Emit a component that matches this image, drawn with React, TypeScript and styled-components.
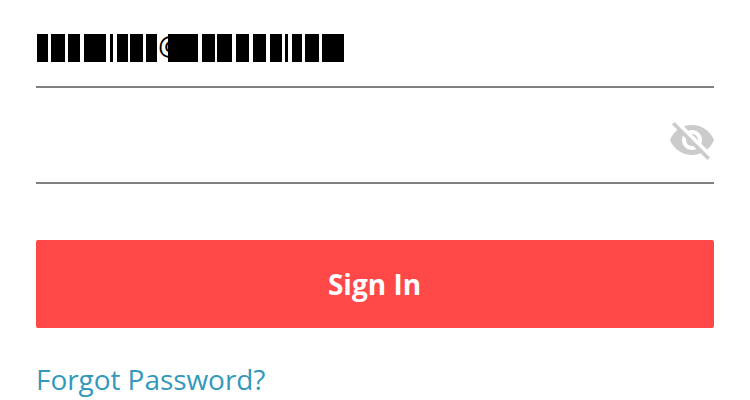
import React from "react";
import styled, { createGlobalStyle } from "styled-components";

const GlobalStyle = createGlobalStyle`
  * { box-sizing: border-box; }
  body {
    margin: 0;
    background: #fff;
    font-family: "Open Sans", "Noto Sans", sans-serif;
    overflow: hidden;
    -webkit-font-smoothing: antialiased;
  }
`;

const Form = styled.form`
  display: flex;
  flex-direction: column;
  height: 400px;
  padding: 0 36px;
`;

const Field = styled.div<{ $height: number; $top: number }>`
  display: flex;
  align-items: flex-start;
  height: ${(p) => p.$height}px;
  padding-top: ${(p) => p.$top}px;
  border-bottom: 2px solid #808080;
`;

const Redacted = styled.div`
  display: flex;
  height: 28px;
  padding-left: 1px;
`;

const Bar = styled.span<{ $width: number; $gap: number }>`
  flex: none;
  width: ${(p) => p.$width}px;
  margin-right: ${(p) => p.$gap}px;
  background: #000;
`;

// The bar that follows is painted over the right part of the sign.
const AtSign = styled.span`
  flex: none;
  width: 10px;
  margin-left: -1px;
  color: #000;
  font-size: 28px;
  line-height: 22px;
`;

const ToggleButton = styled.button`
  width: 48px;
  height: 48px;
  margin: 0 -2px 0 auto;
  padding: 0;
  border: 0;
  background: none;
  color: #cbcbcb;

  svg { display: block; }
`;

const SignInButton = styled.button`
  flex: none;
  height: 88px;
  margin-top: 56px;
  padding: 0 1px 0 0;
  border: 0;
  border-radius: 2px;
  background: #ff4848;
  color: #fff;
  font: 700 28px/88px "Open Sans", "Noto Sans", sans-serif;
`;

const ForgotLink = styled.a`
  align-self: flex-start;
  margin-top: 32px;
  color: #3399bb;
  font-size: 28px;
  line-height: 38px;
  letter-spacing: -0.06px;
  white-space: nowrap;
`;

// Each entry is [bar width, gap after it].
const beforeAt = [[11, 3], [14, 3], [12, 4], [22, 4], [3, 4], [11, 2], [13, 3], [11, 2]];
const afterAt = [
  [30, 4], [13, 2], [15, 4], [13, 4], [13, 4], [12, 3], [3, 4], [10, 3], [14, 3], [22, 0],
];

const HiddenEye = () => (
  <svg width="48" height="48" viewBox="0 0 24 24" fill="currentColor" aria-hidden="true">
    <path d="M12 7c2.76 0 5 2.24 5 5 0 .65-.13 1.26-.36 1.83l2.92 2.92c1.51-1.26 2.7-2.89 3.43-4.75-1.73-4.39-6-7.5-11-7.5-1.4 0-2.74.25-3.98.7l2.16 2.16C10.74 7.13 11.35 7 12 7zM2 4.27l2.28 2.28.46.46C3.08 8.3 1.78 10.02 1 12c1.73 4.39 6 7.5 11 7.5 1.55 0 3.03-.3 4.38-.84l.42.42L19.73 22 21 20.73 3.27 3 2 4.27zM7.53 9.8l1.55 1.55c-.05.21-.08.43-.08.65 0 1.66 1.34 3 3 3 .22 0 .44-.03.65-.08l1.55 1.55c-.67.33-1.41.53-2.2.53-2.76 0-5-2.24-5-5 0-.79.2-1.53.53-2.2zm4.31-.78l3.15 3.15.02-.16c0-1.66-1.34-3-3-3l-.17.01z" />
  </svg>
);

export default function App() {
  return (
    <>
      <GlobalStyle />
      <Form>
        <Field $height={88} $top={34}>
          <Redacted>
            {beforeAt.map(([width, gap], i) => (
              <Bar key={i} $width={width} $gap={gap} />
            ))}
            <AtSign>@</AtSign>
            {afterAt.map(([width, gap], i) => (
              <Bar key={i} $width={width} $gap={gap} />
            ))}
          </Redacted>
        </Field>
        <Field $height={96} $top={28}>
          <ToggleButton type="button">
            <HiddenEye />
          </ToggleButton>
        </Field>
        <SignInButton type="button">Sign In</SignInButton>
        <ForgotLink>Forgot Password?</ForgotLink>
      </Form>
    </>
  );
}
